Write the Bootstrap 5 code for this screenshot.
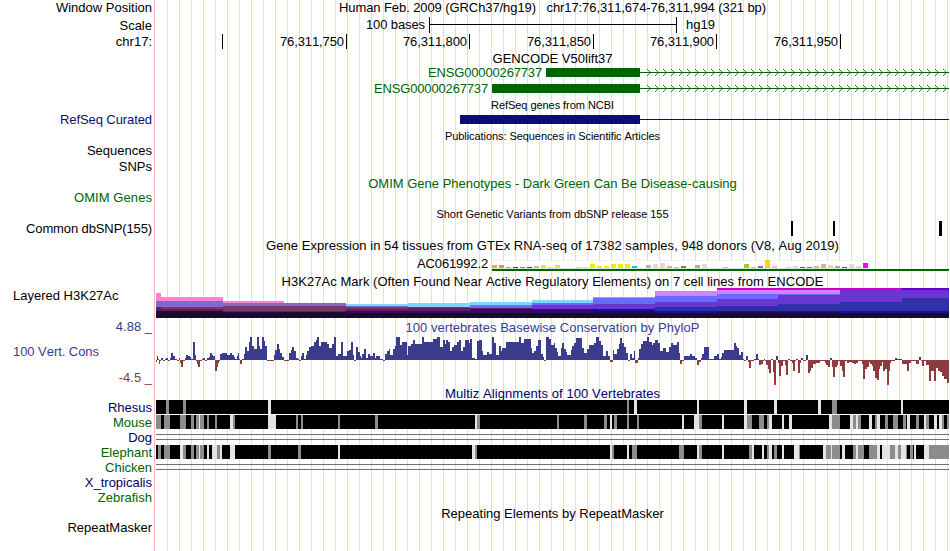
<!DOCTYPE html>
<html lang="en">
<head>
<meta charset="utf-8">
<title>Genome Browser chr17:76,311,674-76,311,994</title>
<link rel="stylesheet" href="https://cdn.jsdelivr.net/npm/bootstrap@5.3.0/dist/css/bootstrap.min.css">
<style>
body{margin:0;background:#fff;color:#000;font:13px "Liberation Sans",Arial,sans-serif;font-kerning:none;overflow:hidden}
.browser{width:949px;height:551px;
 background:linear-gradient(#ffb4b4,#ffb4b4) 154px 0/1px 100% no-repeat,
 repeating-linear-gradient(90deg,#dcdcff 0 1px,transparent 1px 12px) 167px 0/782px 100% no-repeat}
.rw{display:flex;white-space:pre;height:15px;line-height:15px}
.lab{width:156px;padding-right:4px;text-align:right;flex:none}
.lab-left{text-align:left;padding-left:13px}
.trk{width:793px;display:flex;flex:none}
.ttl{width:793px;text-align:center}
.sm{font-size:11px}
.h14{height:14px;line-height:15px}.h16{height:16px;line-height:16px}.h17{height:17px;line-height:17px}
.h18{height:18px;line-height:18px}.h20{height:20px;line-height:20px}.h30{height:30px;line-height:16px}.h50{height:50px;line-height:16px}
.lh13{line-height:13px}.lh17{line-height:17px}.lh18{line-height:18px}.lh19{line-height:19px}
.navy{color:#000064}.refseq{color:#0c0c78}.green{color:#006400}.cons{color:#3c3c8c}.neg{color:#8c3c3c}
.tick{height:15px;line-height:16px;margin-top:1px;border-right:1px solid #000;text-align:right;padding-right:2px;flex:none}
.t1{width:67px}.t2{width:124px}.t3{width:123px}
.pre-scale{width:269px;text-align:right;margin-right:4px}
.post-scale{margin-left:9px}
.pre-a{width:386px;text-align:right;margin-right:4px}
.pre-b{width:332px;text-align:right;margin-right:4px}
svg{display:block;flex:none;shape-rendering:crispEdges}
</style>
<script src="https://cdn.jsdelivr.net/npm/bootstrap@5.3.0/dist/js/bootstrap.bundle.min.js"></script>
</head>
<body>
<main class="browser d-flex flex-column">
<div class="rw h16"><div class="lab">Window Position</div><div class="ttl"><span data-w="427">Human Feb. 2009 (GRCh37/hg19)   chr17:76,311,674-76,311,994 (321 bp)</span></div></div>
<div class="rw h17"><div class="lab lh19">Scale</div><div class="trk"><span class="pre-scale"><span data-w="59">100 bases</span></span><svg width="248" height="17"><path d="M0 1h1v7h246V1h1v16h-1V9H1v8H0z"/></svg><span class="post-scale">hg19</span></div></div>
<div class="rw h18"><div class="lab">chr17:</div><div class="trk"><div class="tick t1"></div><div class="tick t2"><span data-w="64">76,311,750</span></div><div class="tick t3"><span data-w="64">76,311,800</span></div><div class="tick t2"><span data-w="64">76,311,850</span></div><div class="tick t3"><span data-w="64">76,311,900</span></div><div class="tick t2"><span data-w="64">76,311,950</span></div></div></div>
<div class="rw h14"><div class="lab"></div><div class="ttl">GENCODE V50lift37</div></div>
<div class="rw green"><div class="lab"></div><div class="trk"><span class="pre-a"><span data-w="114">ENSG00000267737</span></span><svg class="gene" data-x="546" width="403" height="15" viewBox="546 65 403 15"></svg></div></div>
<div class="rw h17 green"><div class="lab"></div><div class="trk"><span class="pre-b"><span data-w="114">ENSG00000267737</span></span><svg class="gene" data-x="492" width="457" height="17" viewBox="492 64 457 17"></svg></div></div>
<div class="rw lh17"><div class="lab"></div><div class="ttl sm"><span data-w="123">RefSeq genes from NCBI</span></div></div>
<div class="rw"><div class="lab refseq"><span data-w="92">RefSeq Curated</span></div><svg width="793" height="15" viewBox="156 112 793 15"><path fill="#0c0c78" d="M460 115h180v9H460zM640 119h309v1H640z"/></svg></div>
<div class="rw h17 lh19"><div class="lab"></div><div class="ttl sm"><span data-w="215">Publications: Sequences in Scientific Articles</span></div></div>
<div class="rw lh13"><div class="lab">Sequences</div></div>
<div class="rw h16"><div class="lab">SNPs</div></div>
<div class="rw h16 lh18"><div class="lab"></div><div class="ttl green">OMIM Gene Phenotypes - Dark Green Can Be Disease-causing</div></div>
<div class="rw lh13"><div class="lab green"><span data-w="78">OMIM Genes</span></div></div>
<div class="rw lh17"><div class="lab"></div><div class="ttl sm"><span data-w="232">Short Genetic Variants from dbSNP release 155</span></div></div>
<div class="rw h16"><div class="lab"><span data-w="126">Common dbSNP(155)</span></div><svg width="793" height="16" viewBox="156 221 793 16"><path d="M791 221h2v15h-2zM833 221h2v15h-2zM939 221h3v15h-3z"/></svg></div>
<div class="rw h17"><div class="lab"></div><div class="ttl"><span data-w="573">Gene Expression in 54 tissues from GTEx RNA-seq of 17382 samples, 948 donors (V8, Aug 2019)</span></div></div>
<div class="rw h20"><div class="lab"></div><div class="trk"><span class="pre-b"><span data-w="71">AC061992.2</span></span><svg id="gtex" width="457" height="20" viewBox="492 254 457 20"></svg></div></div>
<div class="rw h14"><div class="lab"></div><div class="ttl"><span data-w="542">H3K27Ac Mark (Often Found Near Active Regulatory Elements) on 7 cell lines from ENCODE</span></div></div>
<div class="rw h30"><div class="lab lab-left">Layered H3K27Ac</div><svg id="h3k" width="793" height="30" viewBox="156 288 793 30"></svg></div>
<div class="rw h18 cons"><div class="lab">4.88 _</div><div class="ttl lh19"><span data-w="294">100 vertebrates Basewise Conservation by PhyloP</span></div></div>
<div class="rw h50"><div class="lab lab-left cons d-flex flex-column justify-content-between pt-2"><span><span data-w="86">100 Vert. Cons</span></span><span class="neg text-end">-4.5 _</span></div><svg id="wig" width="793" height="50" viewBox="156 336 793 50"></svg></div>
<div class="rw h14"><div class="lab"></div><div class="ttl navy"><span data-w="215">Multiz Alignments of 100 Vertebrates</span></div></div>
<div class="rw"><div class="lab navy">Rhesus</div><svg class="aln" data-k="rhesus" width="793" height="15" viewBox="156 0 793 15"></svg></div>
<div class="rw"><div class="lab green">Mouse</div><svg class="aln" data-k="mouse" width="793" height="15" viewBox="156 0 793 15"></svg></div>
<div class="rw"><div class="lab navy">Dog</div><svg width="793" height="15"><path fill="#707070" d="M0 4h793v1H0zM0 9h793v1H0z"/></svg></div>
<div class="rw"><div class="lab green">Elephant</div><svg class="aln" data-k="elephant" width="793" height="15" viewBox="156 0 793 15"></svg></div>
<div class="rw"><div class="lab green">Chicken</div><svg width="793" height="15"><path fill="#707070" d="M0 4h793v1H0zM0 9h793v1H0z"/></svg></div>
<div class="rw"><div class="lab navy">X_tropicalis</div></div>
<div class="rw"><div class="lab green">Zebrafish</div></div>
<div class="rw h16 lh18"><div class="lab"></div><div class="ttl">Repeating Elements by RepeatMasker</div></div>
<div class="rw lh13"><div class="lab">RepeatMasker</div></div>
</main>
<script>
// track captions are spaced to fixed widths
document.querySelectorAll('[data-w]').forEach(e=>{
  e.style.letterSpacing=((e.dataset.w-e.getBoundingClientRect().width)/e.textContent.length)+'px';
});
const R=(x,y,w,h,f)=>`<rect x="${x}" y="${y}" width="${w}" height="${h}" fill="${f}"/>`;

// gene models: exon block, intron line, strand arrows
document.querySelectorAll('.gene').forEach(s=>{
  const x0=+s.dataset.x;
  let o=R(x0,68,640-x0,9,'#006400')+R(640,72,309,1,'#006400'),d='';
  for(let x=647;x<946;x+=8)for(let k=0;k<3;k++)d+=`M${x+k} ${69+k}h1v1h-1zM${x+k} ${75-k}h1v1h-1z`;
  s.innerHTML=o+`<path fill="#006400" fill-opacity=".8" d="${d}"/>`;
});

// tissue expression: height, colour
const Y='#eeee00',T='#cdb79e',P='#eed5d2';
const tissues=[[3,'#ffa54f'],[3,'#ee9a00'],[1,'#8fbc8f'],[1,'#8b1c62'],[1,'#ee6a50'],[1,'#ff0000'],[2,T],[3,Y],[1,Y],[3,Y],[0,Y],[0,Y],[1,Y],[1,Y],[4,Y],[2,Y],[2,Y],[4,Y],[4,Y],[4,Y],[2,'#00cdcd'],[0,P],[3,'#9ac0cd'],[4,P],[5,P],[2,T],[1,T],[2,'#8b7355'],[0,T],[3,'#cdaa7d'],[4,P],[0,P],[0,P],[1,T],[0,T],[0,T],[4,'#9acd32'],[1,T],[2,'#7a67ee'],[8,'#ffd700'],[2,'#ffb6c1'],[0,P],[1,'#b4eeb4'],[2,'#d9d9d9'],[1,'#3a5fcd'],[1,'#1e90ff'],[2,T],[4,T],[3,'#ffd39b'],[2,'#a6a6a6'],[1,'#008b45'],[4,P],[2,P],[5,'#ff00ff']];
document.getElementById('gtex').innerHTML=R(492,260,378,9,'#fff')+R(492,260,378,1,'#f0f0f0')+R(869,260,1,9,'#f0f0f0')+R(492,268,378,1,'#e2e2e2')+tissues.map(([h,c],i)=>R(492+7*i,268-h,5,h,c)).join('')+R(492,269,457,2,'#006400');

// layered histone marks: x, then alternating top and colour down to the base
const pk='#ff80d4',sl='#8068d4',mr='#803468',pu='#661a66',nv='#1a0a50',dk='#190c28',sk='#80d4ff',bl='#6a6aff',vi='#6a35d0',la='#d480ff',ind='#3030a8',bd='#1212a0',mg='#cc00cc',dp='#320a68';
const layers=[[156,293,pk,301,sl,307,pu,311,nv,314,dk],[161,297,pk,301,sl,307,mr,309,pu,311,nv,312,dk],[223,301,pk,303,sl,306,mr,311,pu,312,nv,314,dk],[284,303,sl,306,mr,311,pu,312,dk],[346,304,sk,306,sl,307,mr,309,pu,311,dp,313,dk],[408,303,sk,307,mr,308,pu,311,dp,313,dk],[470,302,sk,305,bl,308,pu,309,dp,313,dk],[532,300,sk,303,bl,305,vi,309,bd,310,dp,313,dk],[593,297,la,298,bl,304,vi,309,bd,311,'#1e0a70',313,dk],[655,291,la,296,bl,302,vi,307,ind,311,bd,313,dk],[717,288,mg,290,la,294,bl,299,vi,306,ind,311,bd,312,nv,314,dk],[778,288,mg,290,la,294,bl,295,vi,304,ind,311,bd,312,nv,314,dk],[840,288,mg,290,vi,302,ind,311,bd,313,dk],[902,288,'#6600cc',290,vi,298,ind,311,bd,313,dk],[949]];
document.getElementById('h3k').innerHTML=layers.slice(0,-1).map((a,i)=>{let o='';for(let k=1;k<a.length;k+=2)o+=R(a[0],a[k],layers[i+1][0]-a[0],318-a[k],a[k+1]);return o}).join('');

// conservation steps: x:value
const wig='156:-2 157:4 158:1 159:-4 160:-1 161:2 163:-1 165:1 166:2 168:-1 170:2 171:7 173:4 175:1 177:-1 179:2 180:-3 181:-7 183:-1 185:2 186:5 188:4 190:3 191:1 193:18 195:5 196:-1 197:-4 198:-7 200:-1 202:1 203:2 205:-1 207:2 209:3 210:7 212:5 213:4 215:-11 217:-7 218:-3 219:-1 220:6 222:7 227:5 230:7 232:5 234:3 235:1 237:4 238:7 239:1 240:-4 242:1 244:6 245:13 247:9 249:18 250:23 252:14 254:11 257:23 259:14 260:11 262:23 264:19 265:14 267:-1 274:5 275:10 277:16 279:11 280:7 282:3 284:-1 289:7 291:10 292:13 294:9 296:2 298:1 299:-1 301:4 302:7 304:1 306:5 307:9 309:13 311:14 314:18 316:20 317:23 319:14 321:18 327:16 329:12 332:16 334:23 336:4 338:6 341:18 343:4 347:9 349:10 351:18 353:5 354:-1 356:13 358:8 360:4 361:2 362:6 364:11 366:2 368:6 370:4 373:7 375:2 376:4 380:1 383:-1 385:6 387:9 389:11 390:5 393:11 395:14 396:23 400:15 402:18 407:5 408:14 411:16 413:20 415:16 422:23 424:18 433:21 437:23 440:13 443:20 445:16 446:20 448:18 450:9 452:13 454:15 457:18 459:20 461:9 463:13 465:20 469:17 470:21 472:2 475:1 477:19 479:20 482:9 483:5 487:8 489:6 492:23 494:17 496:5 499:14 501:9 502:12 506:18 519:23 521:17 524:21 531:12 532:7 534:9 536:14 538:20 541:6 543:3 544:-1 546:23 549:21 551:15 554:17 555:12 557:8 558:4 561:12 562:17 564:11 566:8 567:5 571:10 572:14 574:17 576:22 582:12 584:7 587:11 589:15 594:17 596:23 599:19 601:15 603:4 606:9 608:4 610:-2 613:10 614:6 617:11 619:16 620:22 622:17 624:13 626:7 628:-1 630:6 632:2 634:9 635:-3 638:2 639:11 641:16 643:19 647:23 649:18 652:15 653:17 655:20 658:17 660:9 663:12 666:8 669:13 671:17 673:15 677:18 679:7 680:-4 682:-1 684:4 690:6 692:4 695:2 697:-5 699:-2 701:2 702:6 704:13 709:1 714:4 717:6 719:1 721:3 722:7 724:10 734:17 736:14 737:12 739:5 741:8 743:1 744:-1 746:4 748:-2 749:-8 751:-1 754:1 756:6 758:1 759:-5 761:-4 763:-1 764:1 765:-1 766:-5 768:-9 769:-13 771:1 773:-12 774:-23 776:4 778:-3 779:-16 781:-6 783:-1 785:-5 786:-15 788:1 790:-1 792:-3 793:-11 795:-1 796:1 798:-13 800:-3 801:2 803:-1 806:5 808:-13 810:-11 811:-8 813:-4 816:-3 820:-1 825:-3 826:-5 828:-7 830:2 832:-7 833:-17 835:-7 837:-5 838:-1 840:-6 842:-11 843:-17 845:-1 847:-3 849:-2 852:-3 854:-4 856:-3 858:-1 862:-4 863:-19 865:-9 867:-7 869:-2 870:-4 872:-6 873:-11 875:-18 877:-20 879:-9 880:-6 882:-2 883:-11 885:-9 887:-23 889:-11 890:-3 891:-1 895:2 897:1 902:-4 907:-11 909:-3 911:-1 916:-4 919:3 921:-1 922:-6 924:-1 926:-5 929:-21 931:-11 934:-21 936:-8 938:-11 940:-12 942:-16 944:-19 947:-23 949:0'.split(' ').map(s=>s.split(':').map(Number));
document.getElementById('wig').innerHTML=wig.slice(0,-1).map(([x,v],i)=>{const w=wig[i+1][0]-x;return v>0?R(x,360-v,w,v,'#3c3c8c'):R(x,360,w,-v,'#8c3c3c')}).join('')+R(774,383,2,2,'#ff00ff')+R(887,383,2,2,'#ff00ff');

// alignment gaps: g = grey, w = near white
const aln={
rhesus:'g166-169 g183-186 w268-271 g627-629 w634-637 w697-699 w744-747 w774-777 w818-821 g832-837 w901-903',
mouse:'g156-161 g164-170 g180-186 g191-194 g196-199 w199-200 g200-204 g207-209 g215-217 w230-233 g233-235 w268-276 g296-298 g301-303 g338-340 g375-378 w475-477 g477-480 g557-559 g584-587 g604-607 w610-612 g614-617 g627-629 g637-639 w682-684 w694-699 g699-702 w722-724 w744-747 g747-752 g759-764 g767-769 w769-772 w782-784 w789-792 w829-832 g832-840 w850-853 g853-856 w856-858 g858-861 w869-872 g875-877 w877-880 g885-888 g893-898 g903-906 w907-910 g916-919 w924-926 g926-929 w934-937 w939-942 g942-944 g947-949',
elephant:'g158-161 g164-170 w180-183 g183-186 g191-194 g196-199 w199-200 g200-204 w207-209 w212-217 g217-220 w220-222 w230-235 g268-271 g298-301 w338-340 w472-475 g475-477 w610-612 g612-614 w627-629 g632-637 g679-684 w697-699 g699-702 w722-724 g749-752 w752-754 w762-764 g767-769 w769-772 g774-777 w782-784 w794-799 g799-800 w823-826 g826-831 w831-832 g832-840 w842-845 g853-856 w856-858 g858-864 g869-877 w877-880 w882-890 g890-895 w895-898 g898-901 w901-906 g906-907 g910-913 w914-916 w924-929 g929-949'};
document.querySelectorAll('.aln').forEach(s=>{
  s.innerHTML=R(156,0,793,14,'#000')+aln[s.dataset.k].split(' ').map(t=>{const [a,b]=t.slice(1).split('-');return R(a,0,b-a,14,t[0]=='g'?'#8c8c8c':'#e4e4e4')}).join('');
});
</script>
</body>
</html>
